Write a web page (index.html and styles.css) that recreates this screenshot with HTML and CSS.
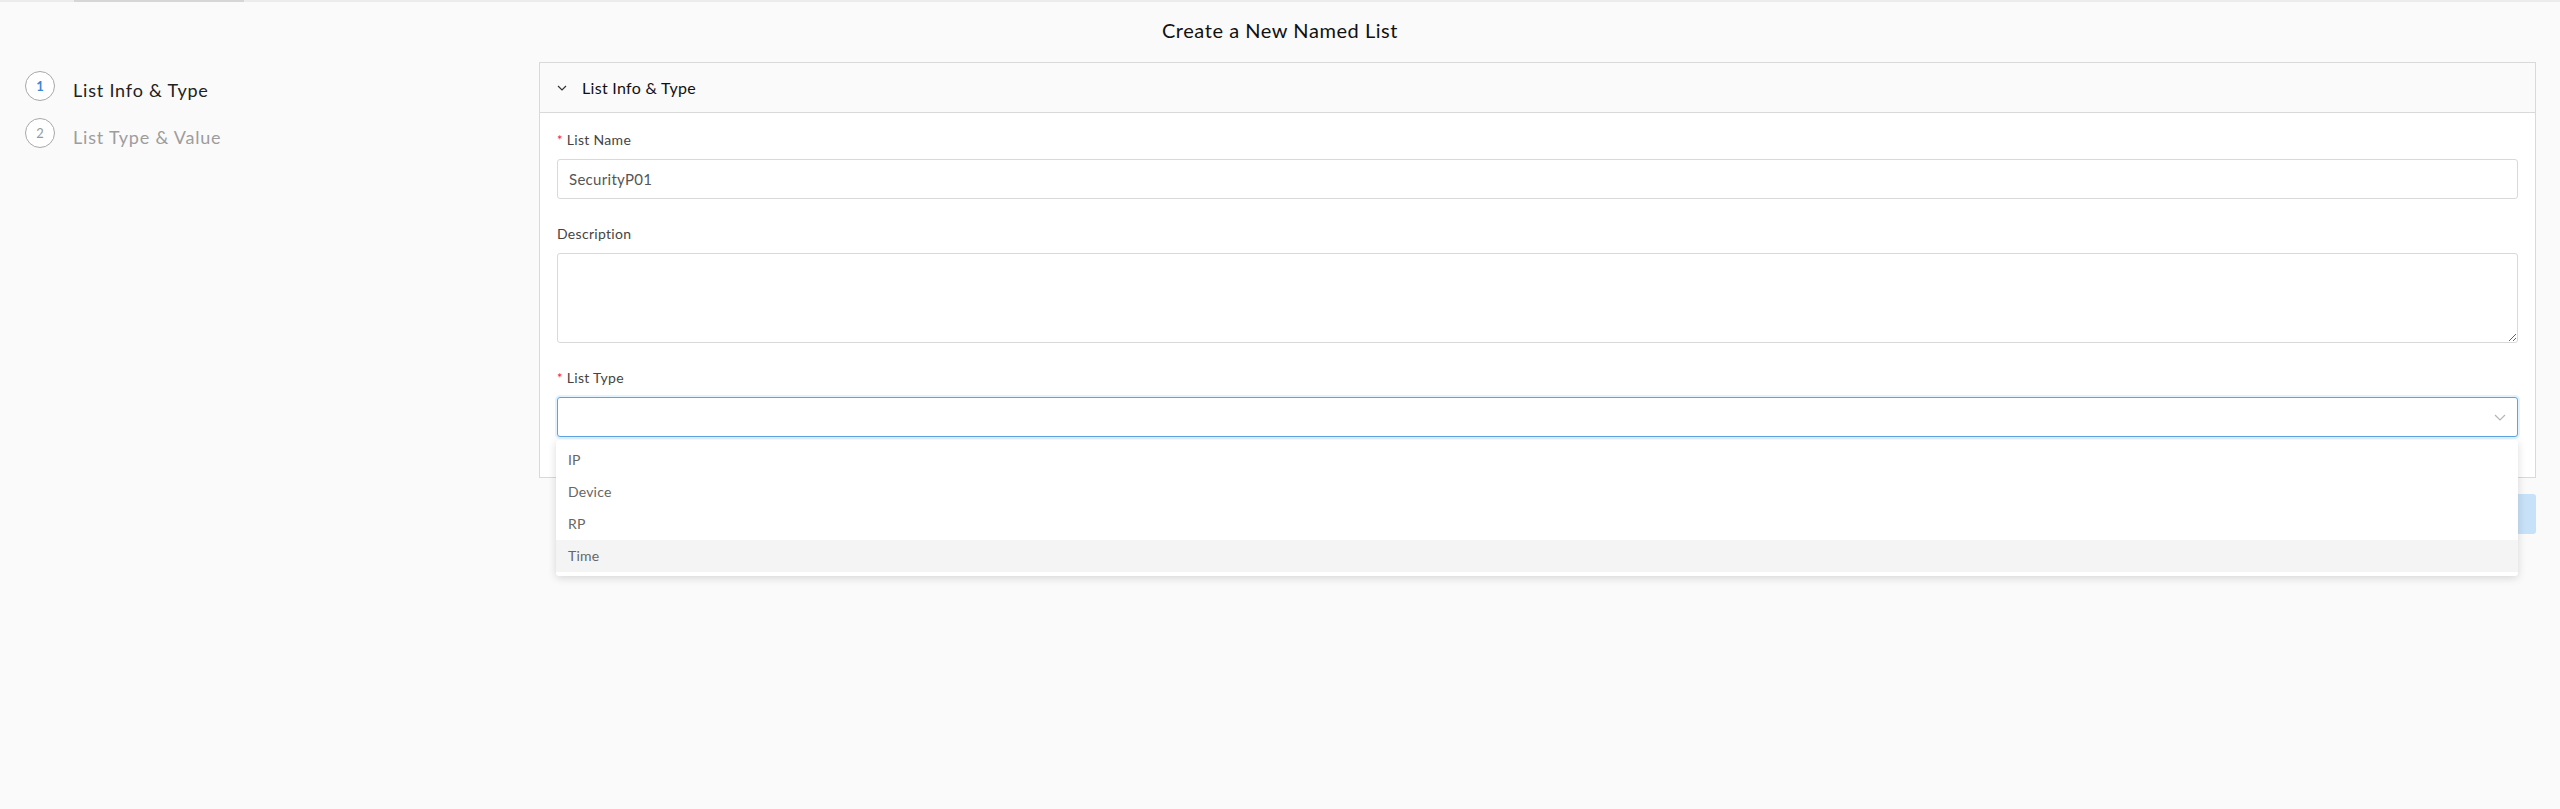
FILE: index.html
```html
<!DOCTYPE html>
<html lang="en">
<head>
<meta charset="utf-8">
<title>Create a New Named List</title>
<link rel="stylesheet" href="styles.css">
</head>
<body>
<div class="topline"><span class="topline-indicator"></span></div>
<header class="page-header">
  <h1 class="page-title">Create a New Named List</h1>
</header>
<main class="layout">
  <nav class="steps">
    <div class="step step-active">
      <span class="step-circle">1</span>
      <span class="step-label">List Info &amp; Type</span>
    </div>
    <div class="step">
      <span class="step-circle">2</span>
      <span class="step-label">List Type &amp; Value</span>
    </div>
  </nav>
  <section class="content">
    <div class="panel">
      <div class="panel-header">
        <svg class="panel-chevron" width="10" height="6" viewBox="0 0 10 6"><path d="M1 1 L5 5 L9 1" fill="none" stroke="#333" stroke-width="1.2"/></svg>
        <span class="panel-title">List Info &amp; Type</span>
      </div>
      <div class="panel-body">
        <div class="form-item">
          <label class="form-label"><span class="req">*</span>List Name</label>
          <input class="text-input" type="text" value="SecurityP01">
        </div>
        <div class="form-item">
          <label class="form-label">Description</label>
          <textarea class="text-area"></textarea>
        </div>
        <div class="form-item">
          <label class="form-label"><span class="req">*</span>List Type</label>
          <div class="select-wrap">
            <div class="select-box">
              <svg class="select-arrow" width="12" height="7" viewBox="0 0 12 7"><path d="M1 1 L6 6 L11 1" fill="none" stroke="#b5b5b5" stroke-width="1.2"/></svg>
            </div>
            <ul class="dropdown">
              <li class="dropdown-item">IP</li>
              <li class="dropdown-item">Device</li>
              <li class="dropdown-item">RP</li>
              <li class="dropdown-item dropdown-item-hover">Time</li>
            </ul>
          </div>
        </div>
      </div>
    </div>
    <div class="actions">
      <button class="btn-next" type="button">Next</button>
    </div>
  </section>
</main>
</body>
</html>
```
FILE: styles.css
```css
* { box-sizing: border-box; }
html, body {
  margin: 0;
  padding: 0;
  background: #fafafa;
  font-family: Lato, "Noto Sans", sans-serif;
  color: #222;
}
body { height: 809px; overflow: hidden; }

.topline {
  height: 2px;
  background: #ececec;
  position: relative;
}
.topline-indicator {
  position: absolute;
  left: 74px;
  width: 170px;
  top: 0;
  height: 2px;
  background: #d6d6d6;
}

.page-header {
  height: 60px;
  display: flex;
  align-items: center;
  justify-content: center;
}
.page-title {
  margin: 0;
  font-size: 20px;
  font-weight: 400;
  color: #111;
  letter-spacing: 0.55px;
  padding-bottom: 5px;
}

.layout {
  display: grid;
  grid-template-columns: 515px 1fr;
  padding: 0 24px;
}

.steps {
  display: flex;
  flex-direction: column;
  gap: 17px;
  padding-top: 9px;
  padding-left: 1px;
}
.step {
  display: flex;
  align-items: center;
  gap: 18px;
  height: 30px;
}
.step-circle {
  width: 30px;
  height: 30px;
  border: 1px solid #a8a8a8;
  border-radius: 50%;
  display: flex;
  align-items: center;
  justify-content: center;
  font-size: 13px;
  color: #999;
  background: #fff;
}
.step-label {
  font-size: 18px;
  color: #9d9d9d;
  letter-spacing: 0.8px;
  margin-top: 8px;
}
.step-active .step-circle { color: #3b86d6; font-weight: 700; }
.step-active .step-label { color: #222; }

.panel {
  border: 1px solid #d9d9d9;
  background: #fff;
}
.panel-header {
  height: 50px;
  background: #fafafa;
  border-bottom: 1px solid #d9d9d9;
  display: flex;
  align-items: center;
  padding-left: 17px;
  gap: 15px;
}
.panel-title {
  font-size: 16px;
  color: #111;
  letter-spacing: 0.3px;
}
.panel-body {
  padding: 16px 17px 16px 17px;
}
.form-item {
  margin-bottom: 24px;
}
.form-label {
  display: block;
  height: 22px;
  line-height: 22px;
  font-size: 14px;
  color: #444;
  letter-spacing: 0.3px;
  margin-bottom: 8px;
}
.req {
  color: #f5222d;
  margin-right: 4px;
  font-size: 13px;
}
.text-input {
  display: block;
  width: 100%;
  height: 40px;
  border: 1px solid #d9d9d9;
  border-radius: 3px;
  padding: 0 11px;
  font-family: inherit;
  font-size: 15px;
  letter-spacing: 0.3px;
  color: #555;
  background: #fff;
  outline: none;
}
.text-area {
  display: block;
  width: 100%;
  height: 90px;
  border: 1px solid #d9d9d9;
  border-radius: 3px;
  font-family: inherit;
  font-size: 14px;
  background: #fff;
  outline: none;
}
.select-wrap {
  position: relative;
}
.select-box {
  height: 40px;
  border: 1px solid #5fa4e2;
  border-radius: 3px;
  background: #fff;
  box-shadow: 0 0 0 2px rgba(24, 144, 255, 0.12);
  display: flex;
  align-items: center;
  justify-content: flex-end;
  padding-right: 11px;
}
.dropdown {
  position: absolute;
  z-index: 10;
  top: 43px;
  left: -1px;
  right: 0;
  margin: 0;
  padding: 4px 0;
  list-style: none;
  background: #fff;
  border-radius: 3px;
  box-shadow: 0 2px 8px rgba(0, 0, 0, 0.15);
}
.dropdown-item {
  height: 32px;
  line-height: 32px;
  padding-left: 12px;
  font-size: 14px;
  color: #666;
  letter-spacing: 0.2px;
}
.dropdown-item-hover { background: #f4f4f4; }

.actions {
  display: flex;
  justify-content: flex-end;
  margin-top: 16px;
}
.btn-next {
  height: 40px;
  width: 90px;
  border: none;
  border-radius: 3px;
  background: #c7e1f8;
  color: #fff;
  font-family: inherit;
  font-size: 14px;
}
```
